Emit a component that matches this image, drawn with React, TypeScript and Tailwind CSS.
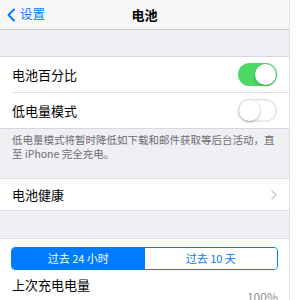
import React, { useState } from 'react';

const Toggle: React.FC<{ on: boolean; onChange: () => void }> = ({ on, onChange }) => (
  <button
    type="button"
    onClick={onChange}
    className={`relative h-[23px] w-[39px] rounded-full transition-colors ${
      on ? 'bg-[#4cd964]' : 'bg-white shadow-[inset_0_0_0_1.5px_#e5e5ea]'
    }`}
  >
    <span
      className={`absolute top-[1px] h-[21px] w-[21px] rounded-full bg-white shadow-[0_1px_3px_rgba(0,0,0,0.3)] ${
        on ? 'left-[17px]' : 'left-[1px]'
      }`}
    />
  </button>
);

const App: React.FC = () => {
  const [percent, setPercent] = useState(true);
  const [lowPower, setLowPower] = useState(false);
  const [range, setRange] = useState<'24h' | '10d'>('24h');

  return (
    <div
      className="flex h-[300px] w-[300px] overflow-hidden bg-white"
      style={{ fontFamily: '"Noto Sans CJK SC", "Noto Sans", sans-serif' }}
    >
      <div className="flex w-[290px] shrink-0 flex-col border-r border-[#e2e2e6] bg-[#efeff4]">
        {/* Nav bar */}
        <div className="relative flex h-[30px] shrink-0 items-center border-b border-[#c8c7cc] bg-[#f7f7f7]">
          <div className="flex items-center pl-[6px] text-[#007aff]">
            <svg width="10" height="14" viewBox="0 0 10 14" fill="none">
              <path d="M8 1.5L2.5 7L8 12.5" stroke="#007aff" strokeWidth="2" strokeLinecap="round" strokeLinejoin="round" />
            </svg>
            <span className="ml-[4px] text-[12.5px] leading-none">设置</span>
          </div>
          <span className="absolute left-1/2 -translate-x-1/2 text-[13px] font-bold leading-none text-black">
            电池
          </span>
        </div>

        <div className="h-[26px] shrink-0" />

        {/* Toggles */}
        <div className="shrink-0 border-y border-[#d8d8dc] bg-white">
          <div className="flex h-[35px] items-center justify-between pl-[12px] pr-[12px]">
            <span className="text-[13px] text-black">电池百分比</span>
            <Toggle on={percent} onChange={() => setPercent(!percent)} />
          </div>
          <div className="ml-[11px] h-px bg-[#e0e0e4]" />
          <div className="flex h-[35px] items-center justify-between pl-[12px] pr-[12px]">
            <span className="text-[13px] text-black">低电量模式</span>
            <Toggle on={lowPower} onChange={() => setLowPower(!lowPower)} />
          </div>
        </div>

        <p className="shrink-0 px-[12px] pt-[4px] text-[10.5px] leading-[14px] text-[#6d6d72]">
          低电量模式将暂时降低如下载和邮件获取等后台活动，直至 iPhone 完全充电。
        </p>

        <div className="h-[17px] shrink-0" />

        {/* Battery health */}
        <div className="flex h-[33px] shrink-0 items-center justify-between border-y border-[#e0e0e4] bg-white pl-[12px] pr-[12px]">
          <span className="text-[13px] text-black">电池健康</span>
          <svg width="6" height="10" viewBox="0 0 6 10" fill="none">
            <path d="M1 1L5 5L1 9" stroke="#c7c7cc" strokeWidth="1.3" strokeLinecap="round" strokeLinejoin="round" />
          </svg>
        </div>

        <div className="h-[27px] shrink-0" />

        {/* Usage */}
        <div className="flex-1 border-t border-[#e0e0e4] bg-white px-[11px] pt-[8px]">
          <div className="flex h-[23px] overflow-hidden rounded-[4px] border border-[#007aff] text-[11px]">
            <button
              type="button"
              onClick={() => setRange('24h')}
              className={`flex-1 ${range === '24h' ? 'bg-[#007aff] text-white' : 'bg-white text-[#007aff]'}`}
            >
              过去 24 小时
            </button>
            <button
              type="button"
              onClick={() => setRange('10d')}
              className={`flex-1 ${range === '10d' ? 'bg-[#007aff] text-white' : 'bg-white text-[#007aff]'}`}
            >
              过去 10 天
            </button>
          </div>
          <div className="mt-[7px] pl-px text-[13px] leading-[16px] text-black">上次充电电量</div>
          <div className="-mt-[4px] text-right text-[12px] leading-[16px] text-[#8e8e93]">100%</div>
        </div>
      </div>
    </div>
  );
};

export default App;
